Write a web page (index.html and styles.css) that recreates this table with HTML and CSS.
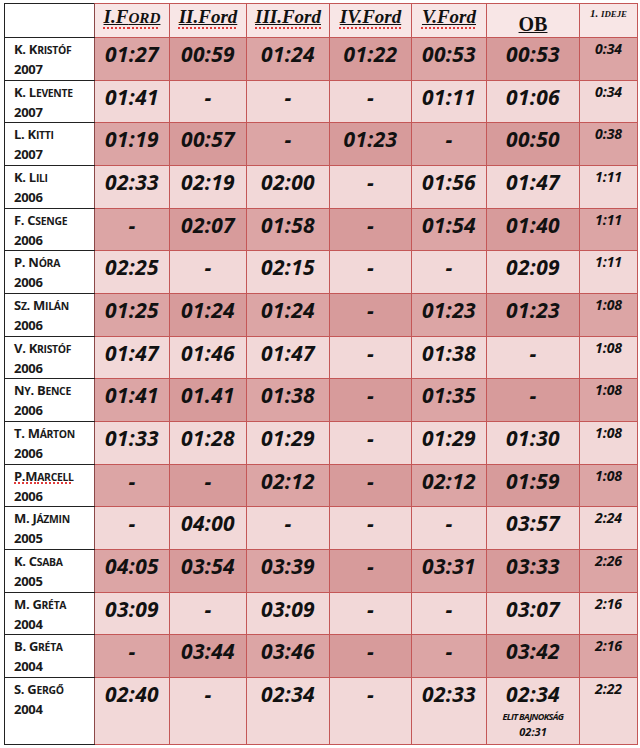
FILE: index.html
```html
<!DOCTYPE html>
<html lang="hu">
<head>
<meta charset="utf-8">
<title>Eredmények</title>
<link rel="stylesheet" href="styles.css">
</head>
<body>
<div class="wrap">
<table class="res">
<colgroup>
<col class="c-name"><col class="c-1"><col class="c-2"><col class="c-3"><col class="c-4"><col class="c-5"><col class="c-ob"><col class="c-id">
</colgroup>
<thead>
<tr class="hd">
<th class="n"></th>
<th><span class="ul"><span class="sp">I.F<span class="s">ord</span></span></span></th>
<th class="e"><span class="ul"><span class="sp">II.Ford</span></span></th>
<th><span class="ul"><span class="sp">III.Ford</span></span></th>
<th class="e"><span class="ul"><span class="sp">IV.Ford</span></span></th>
<th><span class="ul"><span class="sp">V.Ford</span></span></th>
<th class="e ob"><span class="ul">OB</span></th>
<th class="id">1. <span class="s">ideje</span></th>
</tr>
</thead>
<tbody>
<tr class="d"><td class="n">K. K<span class="s">ristóf</span><br>2007</td><td class="t">01:27</td><td class="t e">00:59</td><td class="t">01:24</td><td class="t e">01:22</td><td class="t">00:53</td><td class="t e">00:53</td><td class="i">0:34</td></tr>
<tr class="l"><td class="n">K. L<span class="s">evente</span><br>2007</td><td class="t">01:41</td><td class="t e">-</td><td class="t">-</td><td class="t e">-</td><td class="t">01:11</td><td class="t e">01:06</td><td class="i">0:34</td></tr>
<tr class="d"><td class="n">L. K<span class="s">itti</span><br>2007</td><td class="t">01:19</td><td class="t e">00:57</td><td class="t">-</td><td class="t e">01:23</td><td class="t">-</td><td class="t e">00:50</td><td class="i">0:38</td></tr>
<tr class="l"><td class="n">K. L<span class="s">ili</span><br>2006</td><td class="t">02:33</td><td class="t e">02:19</td><td class="t">02:00</td><td class="t e">-</td><td class="t">01:56</td><td class="t e">01:47</td><td class="i">1:11</td></tr>
<tr class="d"><td class="n">F. C<span class="s">senge</span><br>2006</td><td class="t">-</td><td class="t e">02:07</td><td class="t">01:58</td><td class="t e">-</td><td class="t">01:54</td><td class="t e">01:40</td><td class="i">1:11</td></tr>
<tr class="l"><td class="n">P. N<span class="s">óra</span><br>2006</td><td class="t">02:25</td><td class="t e">-</td><td class="t">02:15</td><td class="t e">-</td><td class="t">-</td><td class="t e">02:09</td><td class="i">1:11</td></tr>
<tr class="d"><td class="n">S<span class="s">z</span>. M<span class="s">ilán</span><br>2006</td><td class="t">01:25</td><td class="t e">01:24</td><td class="t">01:24</td><td class="t e">-</td><td class="t">01:23</td><td class="t e">01:23</td><td class="i">1:08</td></tr>
<tr class="l"><td class="n">V. K<span class="s">ristóf</span><br>2006</td><td class="t">01:47</td><td class="t e">01:46</td><td class="t">01:47</td><td class="t e">-</td><td class="t">01:38</td><td class="t e">-</td><td class="i">1:08</td></tr>
<tr class="d"><td class="n">N<span class="s">y</span>. B<span class="s">ence</span><br>2006</td><td class="t">01:41</td><td class="t e">01.41</td><td class="t">01:38</td><td class="t e">-</td><td class="t">01:35</td><td class="t e">-</td><td class="i">1:08</td></tr>
<tr class="l"><td class="n">T. M<span class="s">árton</span><br>2006</td><td class="t">01:33</td><td class="t e">01:28</td><td class="t">01:29</td><td class="t e">-</td><td class="t">01:29</td><td class="t e">01:30</td><td class="i">1:08</td></tr>
<tr class="d"><td class="n"><span class="sq">P.M<span class="s">arcell</span></span><br>2006</td><td class="t">-</td><td class="t e">-</td><td class="t">02:12</td><td class="t e">-</td><td class="t">02:12</td><td class="t e">01:59</td><td class="i">1:08</td></tr>
<tr class="l"><td class="n">M. J<span class="s">ázmin</span><br>2005</td><td class="t">-</td><td class="t e">04:00</td><td class="t">-</td><td class="t e">-</td><td class="t">-</td><td class="t e">03:57</td><td class="i">2:24</td></tr>
<tr class="d"><td class="n">K. C<span class="s">saba</span><br>2005</td><td class="t">04:05</td><td class="t e">03:54</td><td class="t">03:39</td><td class="t e">-</td><td class="t">03:31</td><td class="t e">03:33</td><td class="i">2:26</td></tr>
<tr class="l"><td class="n">M. G<span class="s">réta</span><br>2004</td><td class="t">03:09</td><td class="t e">-</td><td class="t">03:09</td><td class="t e">-</td><td class="t">-</td><td class="t e">03:07</td><td class="i">2:16</td></tr>
<tr class="d"><td class="n">B. G<span class="s">réta</span><br>2004</td><td class="t">-</td><td class="t e">03:44</td><td class="t">03:46</td><td class="t e">-</td><td class="t">-</td><td class="t e">03:42</td><td class="i">2:16</td></tr>
<tr class="l last"><td class="n">S. G<span class="s">ergő</span><br>2004</td><td class="t">02:40</td><td class="t e">-</td><td class="t">02:34</td><td class="t e">-</td><td class="t">02:33</td><td class="t e">02:34<span class="note">Elit bajnokság</span><span class="note2">02:31</span></td><td class="i">2:22</td></tr>
</tbody>
</table>
</div>
</body>
</html>
```
FILE: styles.css
```css
body {
  margin: 0;
  background: #ffffff;
}

.wrap {
  padding: 3px 0 0 4px;
}

.res {
  border-collapse: collapse;
  table-layout: fixed;
  width: 634px;
}

.c-name { width: 90px; }
.c-1 { width: 75px; }
.c-2 { width: 77px; }
.c-3 { width: 83px; }
.c-4 { width: 82px; }
.c-5 { width: 75px; }
.c-ob { width: 93px; }
.c-id { width: 58px; }

.res th,
.res td {
  border: 1px solid #c45757;
  padding: 0;
  vertical-align: top;
  text-align: center;
  color: #111;
}

.s {
  text-transform: uppercase;
  font-size: 0.8em;
}

.hd { height: 34px; }
.hd th {
  background: #f8e6e6;
  font-family: "Liberation Serif", "DejaVu Serif", serif;
  font-weight: bold;
  font-style: italic;
  font-size: 19px;
  line-height: 22px;
  padding-top: 2px;
}

.hd th.n {
  background: #ffffff;
  border-color: #222;
  border-right-color: #8c4848;
}

.ul {
  text-decoration: underline;
  text-decoration-color: #111;
  text-decoration-thickness: 1px;
}

.sp {
  text-decoration: underline dotted #e03a3a;
  text-decoration-thickness: 2px;
  text-underline-offset: 4px;
}

.hd th.ob {
  font-style: normal;
  font-size: 20px;
  padding-top: 9px;
}

.hd th.id {
  font-size: 11px;
  line-height: 13px;
  padding-top: 3px;
}

tbody tr { height: 42.67px; }
tbody tr.last { height: 67px; }

tr.d td { background: #dca5a5; }
tr.d td.e { background: #d79b9b; }
tr.l td { background: #f2d8d8; }

.res td.n {
  background: #ffffff;
  border-color: #222;
  border-right-color: #8c4848;
  text-align: left;
  padding: 2px 0 0 9px;
  font-family: "Open Sans", "Liberation Sans", sans-serif;
  font-weight: bold;
  font-size: 13px;
  line-height: 19px;
  letter-spacing: -0.3px;
  color: #1a1a1a;
}

.sq {
  text-decoration: underline dotted #e03a3a;
  text-decoration-thickness: 2px;
  text-underline-offset: 2px;
}

td.t {
  font-family: "Open Sans", "Liberation Sans", sans-serif;
  font-weight: bold;
  font-style: italic;
  font-size: 21px;
  line-height: 26px;
  padding-top: 3px;
  letter-spacing: 0.3px;
}

td.i {
  font-family: "Open Sans", "Liberation Sans", sans-serif;
  font-weight: bold;
  font-style: italic;
  font-size: 14px;
  line-height: 18px;
  padding-top: 2px;
}

.note {
  display: block;
  font-size: 9px;
  line-height: 13px;
  letter-spacing: -0.6px;
  text-transform: uppercase;
  margin-top: 3px;
}

.note2 {
  display: block;
  font-size: 11px;
  line-height: 18px;
  letter-spacing: 0;
}
```
